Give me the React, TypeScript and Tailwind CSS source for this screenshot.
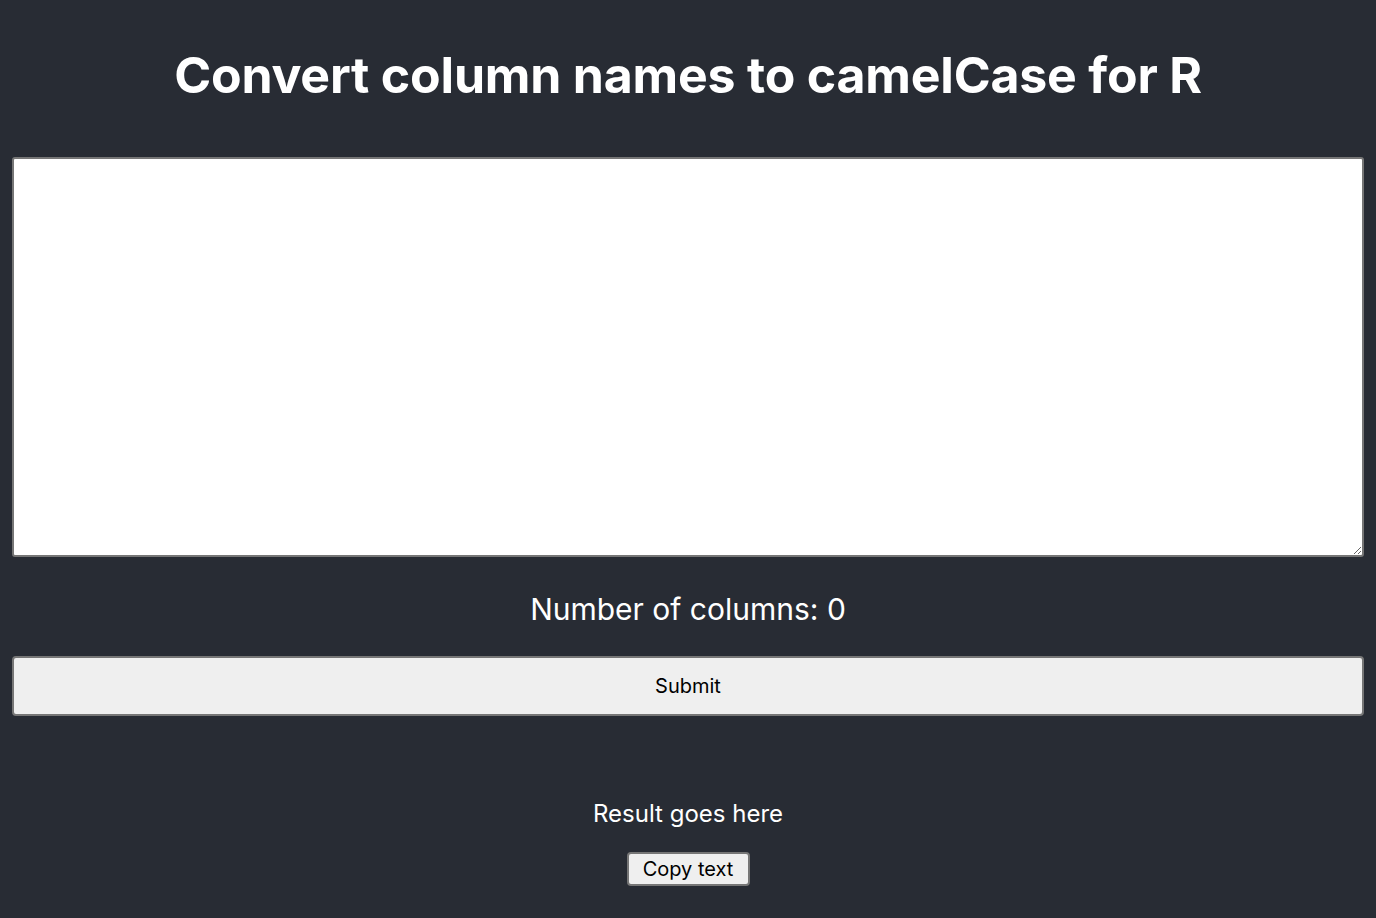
import { useState } from "react";

export default function App() {
  const [text, setText] = useState("");
  const count = text.trim() ? text.trim().split(/[\t,\n]+/).length : 0;

  return (
    <div className="min-h-[918px] bg-[#282c34] text-white font-['Inter','Liberation_Sans',sans-serif] px-3 flex flex-col items-center">
      <h1 className="mt-[45px] text-[50px] leading-[60px] font-bold tracking-[-0.2px]">
        Convert column names to camelCase for R
      </h1>
      <textarea
        value={text}
        onChange={(e) => setText(e.target.value)}
        className="mt-[52px] w-full h-[400px] bg-white text-black border-2 border-[#767676] rounded-[3px] p-1"
      />
      <p className="mt-[34px] text-[30px] leading-[36px]">Number of columns: {count}</p>
      <button className="mt-[29px] w-full h-[60px] bg-[#efefef] text-black text-[20px] border-2 border-[#767676] rounded-[4px]">
        Submit
      </button>
      <p className="mt-[83px] text-[24px] leading-[29px]">Result goes here</p>
      <button className="mt-[24px] h-[34px] w-[123px] bg-[#efefef] text-black text-[20px] border-2 border-[#767676] rounded-[4px]">
        Copy text
      </button>
    </div>
  );
}
